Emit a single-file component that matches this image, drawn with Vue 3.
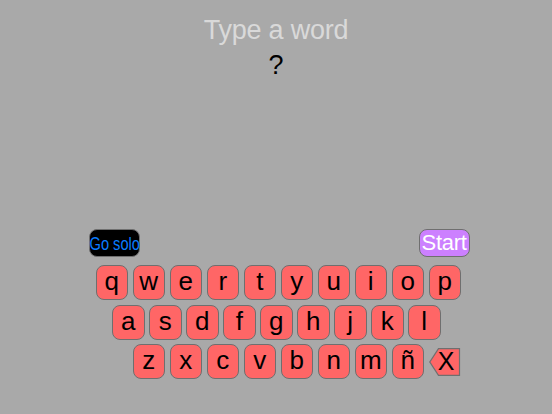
<script setup>
const rows = [
  { cls: "row-top", keys: ["q", "w", "e", "r", "t", "y", "u", "i", "o", "p"] },
  { cls: "row-mid", keys: ["a", "s", "d", "f", "g", "h", "j", "k", "l"] },
  { cls: "row-bot", keys: ["z", "x", "c", "v", "b", "n", "m", "ñ"] },
];
</script>

<template>
  <div class="screen">
    <h1 class="title">Type a word</h1>
    <div class="word">?</div>

    <div class="actions">
      <button class="btn solo"><span class="solo-label">Go solo</span></button>
      <button class="btn start">Start</button>
    </div>

    <div class="keyboard">
      <div v-for="row in rows" :key="row.cls" :class="['row', row.cls]">
        <button v-for="k in row.keys" :key="k" class="key">{{ k }}</button>
        <button v-if="row.cls === 'row-bot'" class="backspace">
          <svg class="back-shape" width="32" height="28" viewBox="0 0 32 28">
            <path d="M9.5 0.7H30.5V27.3H9.5L0.8 14Z" fill="#ff6666" stroke="#6f6f6f" stroke-width="1.2" />
          </svg>
          <span class="back-label">X</span>
        </button>
      </div>
    </div>
  </div>
</template>

<style scoped>
.screen {
  width: 552px;
  height: 414px;
  background: #a9a9a9;
  font-family: "Liberation Sans", Arial, sans-serif;
  display: flex;
  flex-direction: column;
  overflow: hidden;
}

.title {
  margin: 12px 0 0;
  font-size: 27px;
  line-height: 36px;
  font-weight: normal;
  letter-spacing: -0.25px;
  text-align: center;
  color: #d9d9d9;
}

.word {
  font-size: 27px;
  line-height: 34px;
  text-align: center;
  color: #000;
}

.actions {
  display: flex;
  justify-content: space-between;
  margin: 147px 82px 0 89px;
}

.btn {
  width: 51px;
  height: 28px;
  padding: 0;
  border: 1px solid #6f6f6f;
  border-radius: 8px;
  font-family: inherit;
  white-space: nowrap;
}

.solo {
  background: #000;
  color: #0a7cff;
  font-size: 19px;
  padding-top: 1px;
}

.solo-label {
  display: inline-block;
  margin: 0 -10px;
  transform: scaleX(0.77);
}

.start {
  background: #cc80ff;
  color: #fff;
  font-size: 22px;
  letter-spacing: -0.3px;
  padding-right: 1px;
}

.keyboard {
  margin-top: 8px;
  display: flex;
  flex-direction: column;
  gap: 4.7px;
}

.row {
  display: flex;
  gap: 4.5px;
}

.row-top {
  padding-left: 95.5px;
}

.row-mid {
  padding-left: 112px;
}

.row-bot {
  padding-left: 132.5px;
}

.key {
  width: 32.5px;
  height: 35px;
  padding: 0 0 3px;
  border: 1px solid #6f6f6f;
  border-radius: 8px;
  background: #ff6666;
  color: #000;
  font-family: inherit;
  font-size: 26px;
  line-height: 30px;
}

.backspace {
  position: relative;
  width: 32px;
  height: 35px;
  padding: 0;
  border: none;
  background: none;
  color: #000;
  font-family: inherit;
}

.back-shape {
  position: absolute;
  left: 0;
  top: 3.5px;
}

.back-label {
  position: relative;
  left: 1.5px;
  font-size: 25px;
  line-height: 35px;
}
</style>

<style>
html,
body {
  margin: 0;
  background: #a9a9a9;
}
</style>
